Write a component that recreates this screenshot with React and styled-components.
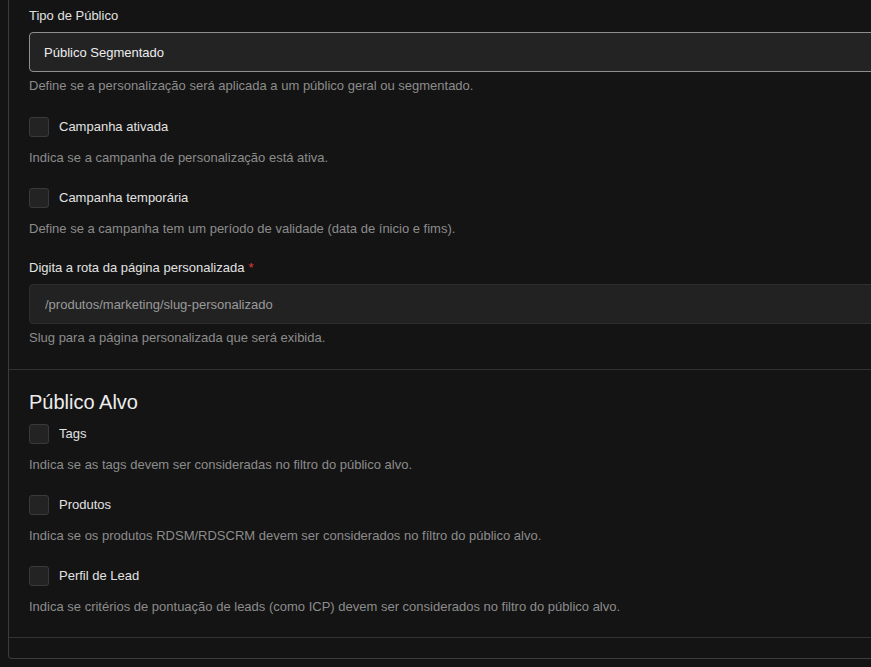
import React from "react";
import styled, { createGlobalStyle } from "styled-components";

const Global = createGlobalStyle`
  html, body { margin: 0; padding: 0; background: #141414; overflow: hidden; }
  body { font-family: "Liberation Sans", Arial, sans-serif; }
  * { box-sizing: border-box; }
`;

const Page = styled.div`
  width: 871px;
  height: 667px;
  overflow: hidden;
  padding-left: 8px;
`;

const Panel = styled.div`
  width: 900px;
  border: 1px solid #3c3c3c;
  border-top: none;
  border-radius: 0 0 4px 4px;
  background: #141414;
`;

const Section = styled.section`
  padding: 8px 20px 0 20px;
  border-bottom: 1px solid #333333;
  padding-top: ${(p) => p.$top || 8}px;
`;

const Heading = styled.h2`
  margin: 0;
  font-size: 20px;
  font-weight: 400;
  line-height: 24px;
  color: #ececec;
  margin-bottom: 10px;
`;

const Field = styled.div`
  display: flex;
  flex-direction: column;
  padding-top: ${(p) => p.$pt ?? 0}px;
  padding-bottom: ${(p) => p.$pb ?? 22}px;
`;

const Label = styled.label`
  font-size: 13px;
  line-height: 16px;
  color: #e2e2e2;
  margin-bottom: 8px;
`;

const Required = styled.span`
  color: #e03c3c;
  margin-left: 4px;
`;

const Select = styled.div`
  height: 40px;
  display: flex;
  align-items: center;
  padding: 0 14px;
  background: #232323;
  border: 1px solid #8e8e8e;
  border-radius: 4px;
  font-size: 13px;
  color: #ededed;
`;

const Input = styled.input`
  height: 40px;
  padding: 0 15px;
  background: #222222;
  border: 1px solid #2e2e2e;
  border-radius: 4px;
  font-family: inherit;
  font-size: 13px;
  color: #ededed;
  outline: none;
  &::placeholder { color: #9a9a9a; }
`;

const Help = styled.div`
  font-size: 13px;
  line-height: 18px;
  color: #8c8c8c;
  margin-top: ${(p) => p.$mt ?? 5}px;
`;

const CheckRow = styled.label`
  display: flex;
  align-items: center;
  gap: 10px;
  height: 20px;
  font-size: 13px;
  line-height: 16px;
  color: #e2e2e2;
`;

const CheckText = styled.span`
  padding-bottom: 1px;
`;

const Box = styled.span`
  width: 20px;
  height: 20px;
  border-radius: 3px;
  background: #232323;
  border: 1px solid #3a3a3a;
  flex-shrink: 0;
`;

const Footer = styled.div`
  height: 20px;
`;

const Check = ({ label, help }) => (
  <Field $pb={21}>
    <CheckRow>
      <Box />
      <CheckText>{label}</CheckText>
    </CheckRow>
    <Help $mt={12}>{help}</Help>
  </Field>
);

export default function App() {
  return (
    <Page>
      <Global />
      <Panel>
        <Section>
          <Field>
            <Label>Tipo de Público</Label>
            <Select>Público Segmentado</Select>
            <Help>Define se a personalização será aplicada a um público geral ou segmentado.</Help>
          </Field>
          <Check label="Campanha ativada" help="Indica se a campanha de personalização está ativa." />
          <Check
            label="Campanha temporária"
            help="Define se a campanha tem um período de validade (data de ínicio e fims)."
          />
          <Field $pt={1}>
            <Label>
              Digita a rota da página personalizada<Required>*</Required>
            </Label>
            <Input placeholder="/produtos/marketing/slug-personalizado" />
            <Help>Slug para a página personalizada que será exibida.</Help>
          </Field>
        </Section>
        <Section $top={20}>
          <Heading>Público Alvo</Heading>
          <Check label="Tags" help="Indica se as tags devem ser consideradas no filtro do público alvo." />
          <Check
            label="Produtos"
            help="Indica se os produtos RDSM/RDSCRM devem ser considerados no fíltro do público alvo."
          />
          <Check
            label="Perfil de Lead"
            help="Indica se critérios de pontuação de leads (como ICP) devem ser considerados no filtro do público alvo."
          />
        </Section>
        <Footer />
      </Panel>
    </Page>
  );
}
